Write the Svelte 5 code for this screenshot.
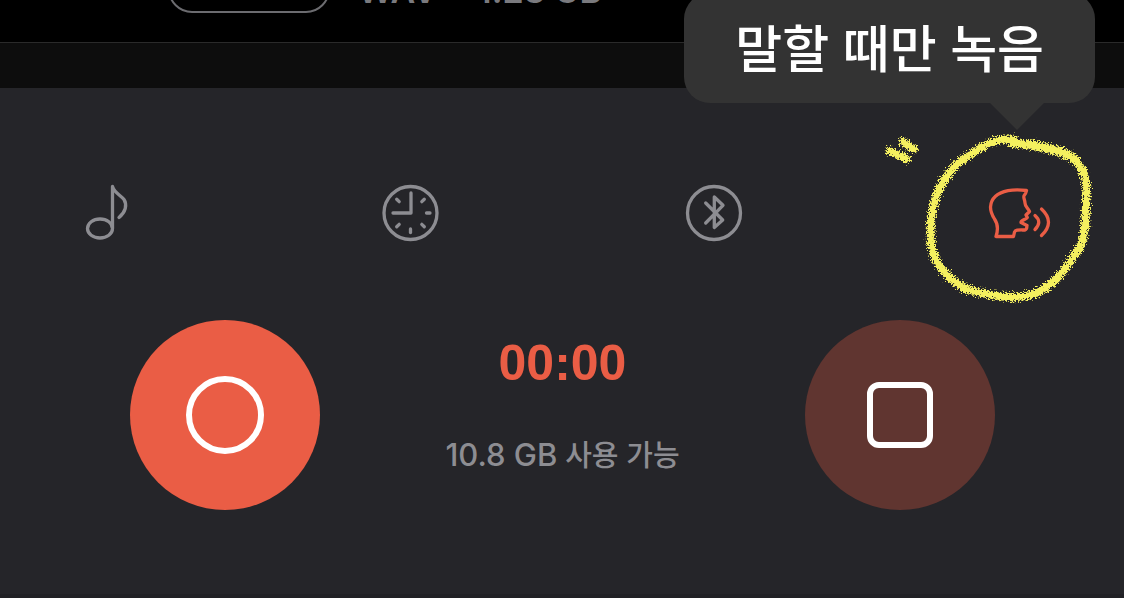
<script lang="ts">
	interface Tool {
		id: string;
		label: string;
		active: boolean;
	}

	let tools: Tool[] = $state([
		{ id: 'music', label: '음악', active: false },
		{ id: 'timer', label: '타이머', active: false },
		{ id: 'bluetooth', label: '블루투스', active: false },
		{ id: 'voice', label: '말할 때만 녹음', active: true }
	]);

	let seconds = $state(0);

	const ticks = [45, 90, 135, 180, 225, 315];

	let clock = $derived(
		`${String(Math.floor(seconds / 60)).padStart(2, '0')}:${String(seconds % 60).padStart(2, '0')}`
	);

	function toggle(tool: Tool) {
		tool.active = !tool.active;
	}

	function stop() {
		seconds = 0;
	}
</script>

<main class="recorder">
	<header class="file-bar">
		<button class="length" type="button">01:14:10</button>
		<span class="format">WAV</span>
		<span>1.23 GB</span>
	</header>
	<div class="divider"></div>

	<section class="panel">
		<div class="tools">
			{#each tools as tool (tool.id)}
				<div class="tool-slot">
					<button
						class="tool"
						class:active={tool.active}
						type="button"
						aria-label={tool.label}
						aria-pressed={tool.active}
						onclick={() => toggle(tool)}
					>
						<svg viewBox="0 0 60 60" aria-hidden="true">
							{#if tool.id === 'music'}
								<ellipse cx="24" cy="45.500" rx="12.500" ry="9.500" />
								<path d="M36.500 45V3.500C38.500 10 45 12.500 48 16.500C51.500 22 49.500 29 43 34.500" />
							{:else if tool.id === 'timer'}
								<circle cx="30.500" cy="30" r="26.500" />
								<path d="M31 10V30H13" />
								{#each ticks as angle}
									<path d="M30.500 14V10.500" transform="rotate({angle} 30.500 30)" />
								{/each}
							{:else if tool.id === 'bluetooth'}
								<circle cx="30" cy="30" r="26.500" />
								<path d="M21.700 20L38.700 37L30.300 44.500V14L39 22.300L21.700 40" />
							{:else}
								<path
									d="M38.500 7.500C31 6.500 26 6.500 20 7.700C9 10 3 16 2.500 24C2.500 29 4 32 6.500 36C10 41 10.500 46 8 53.500H25.500L26.500 49C27.500 46.500 31 47 37 47C39.500 46 38.500 44 39 42.500L33 39.500C33 36.500 38 37 39.300 34.500L38 32L41.500 28.500C40 25 37 23.500 37 20C37 17 34.500 13.500 36.500 12C38 10.500 38 9 38.500 7.500Z"
								/>
								<path d="M47 32.500Q54.500 39 47 46.500M53.500 26Q67.500 39 53.500 52.500" />
							{/if}
						</svg>
					</button>

					{#if tool.id === 'voice'}
						<div class="tooltip" role="tooltip">{tool.label}</div>
						<svg class="marker" viewBox="0 0 220 180" aria-hidden="true">
							<defs>
								<filter id="crayon" x="-10%" y="-10%" width="120%" height="120%">
									<feTurbulence type="fractalNoise" baseFrequency="0.7" numOctaves="2" seed="4" />
									<feDisplacementMap
										in="SourceGraphic"
										scale="10"
										xChannelSelector="R"
										yChannelSelector="G"
									/>
								</filter>
							</defs>
							<g filter="url(#crayon)">
								<path
									d="M139 18C124 15 110 22 93 34C75 44 61 68 58 86C54 108 55 124 60 136C66 149 79 161 91 167C111 173 137 178 156 173C179 166 192 145 204 127C209 119 211 99 211 82C212 64 212 53 204 43C196 31 175 26 139 21"
								/>
								<path d="M137 21C162 22 186 26 201 38" />
								<path d="M28 20L39 27M15 29L32 37" />
							</g>
						</svg>
					{/if}
				</div>
			{/each}
		</div>

		<div class="controls">
			<button class="round record" type="button" aria-label="녹음 시작">
				<span class="ring"></span>
			</button>
			<div class="status">
				<time>{clock}</time>
				<p><span class="amount">10.8 GB</span> 사용 가능</p>
			</div>
			<button class="round stop" type="button" aria-label="정지" disabled onclick={stop}>
				<span class="square"></span>
			</button>
		</div>
	</section>
</main>

<style>
	:global(body) {
		margin: 0;
		background: #252529;
	}

	.recorder {
		min-height: 100vh;
		overflow: hidden;
		box-sizing: border-box;
		background: #252529;
		border-bottom: 4px solid #212125;
		font-family: Inter, 'Noto Sans CJK KR', sans-serif;
	}

	button {
		padding: 0;
		border: 0;
		background: none;
		font: inherit;
		color: inherit;
		cursor: pointer;
	}

	/* scrolled partly out of view above the panel */
	.file-bar {
		display: flex;
		align-items: flex-end;
		height: 82px;
		margin-top: -40px;
		padding: 0 168px 29px;
		box-sizing: border-box;
		background: #000;
		color: #7a7a7e;
		font-size: 34px;
		font-weight: 600;
		line-height: 44px;
		white-space: nowrap;
	}

	.length {
		width: 162px;
		height: 48px;
		padding-bottom: 4px;
		margin-right: 28px;
		border: 2px solid #6c6c70;
		border-radius: 24px;
		font-size: 28px;
		font-weight: 500;
		line-height: 40px;
	}

	.format {
		margin-right: 40px;
	}

	.divider {
		height: 45px;
		border-top: 1px solid #2a2a2a;
		background: #0d0d0d;
	}

	.panel {
		padding: 95px 0 84px;
	}

	.tools {
		display: flex;
		justify-content: space-between;
		padding: 0 76px;
	}

	.tool-slot {
		position: relative;
	}

	.tool {
		display: block;
		width: 60px;
		height: 60px;
		color: #8d8d92;
	}

	.tool.active {
		color: #ea5d45;
	}

	.tool svg {
		display: block;
		width: 60px;
		height: 60px;
		overflow: visible;
		fill: none;
		stroke: currentColor;
		stroke-width: 3.3;
		stroke-linecap: round;
		stroke-linejoin: round;
	}

	.tooltip {
		position: absolute;
		right: -47px;
		bottom: 140px;
		padding: 18px 51px 14px;
		border-radius: 26px;
		background: #333;
		color: #fff;
		font-size: 51px;
		font-weight: 500;
		line-height: 78px;
		white-space: nowrap;
	}

	.tooltip::after {
		content: '';
		position: absolute;
		top: 100%;
		right: 51px;
		border: 27px solid transparent;
		border-top-color: #333;
		border-bottom: 0;
	}

	.marker {
		position: absolute;
		top: -61px;
		left: -113px;
		width: 220px;
		height: 180px;
		overflow: visible;
		pointer-events: none;
		fill: none;
		stroke: #f4f05f;
		stroke-width: 8;
		stroke-linecap: round;
		stroke-linejoin: round;
	}

	.controls {
		display: flex;
		align-items: center;
		justify-content: space-between;
		margin-top: 77px;
		padding: 0 129px 0 130px;
	}

	.round {
		display: flex;
		align-items: center;
		justify-content: center;
		width: 190px;
		height: 190px;
		border-radius: 50%;
	}

	.record {
		background: #ea5d45;
	}

	.stop {
		background: #603530;
	}

	.ring {
		width: 66px;
		height: 66px;
		border: 6px solid #fff;
		border-radius: 50%;
	}

	.square {
		width: 54px;
		height: 54px;
		border: 6px solid #fff;
		border-radius: 12px;
	}

	.status {
		padding-bottom: 22px;
		text-align: center;
	}

	time {
		display: block;
		color: #ea5d45;
		font-family: 'Liberation Sans', sans-serif;
		font-size: 50px;
		font-weight: 700;
		line-height: 60px;
	}

	p {
		margin: 42px 0 0;
		color: #8d8d92;
		font-size: 29px;
		font-weight: 500;
		line-height: 40px;
	}

	.amount {
		font-size: 31px;
	}
</style>
